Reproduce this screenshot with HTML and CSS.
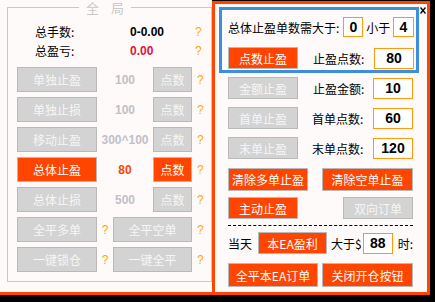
FILE: index.html
```html
<!DOCTYPE html>
<html>
<head>
<meta charset="utf-8">
<link rel="stylesheet" href="styles.css">
</head>
<body>
<div class="win">
  <div class="left">
    <fieldset class="group">
      <legend>全 局</legend>
      <div class="stat"><span class="slabel">总手数:</span><span class="sval">0-0.00</span><span class="q">?</span></div>
      <div class="stat"><span class="slabel">总盈亏:</span><span class="sval red">0.00</span><span class="q">?</span></div>
      <div class="brow first"><span class="btn gray w80">单独止盈</span><span class="bval">100</span><span class="btn gray pts">点数</span><span class="q qb">?</span></div>
      <div class="brow"><span class="btn gray w80">单独止损</span><span class="bval">100</span><span class="btn gray pts">点数</span><span class="q qb">?</span></div>
      <div class="brow"><span class="btn gray w80">移动止盈</span><span class="bval">300^100</span><span class="btn gray pts">点数</span><span class="q qb">?</span></div>
      <div class="brow"><span class="btn orange w80">总体止盈</span><span class="bval hot">80</span><span class="btn orange pts">点数</span><span class="q qb">?</span></div>
      <div class="brow"><span class="btn gray w80">总体止损</span><span class="bval">500</span><span class="btn gray pts">点数</span><span class="q qb">?</span></div>
      <div class="brow"><span class="btn gray w80">全平多单</span><span class="qm">?</span><span class="btn gray w79">全平空单</span><span class="q qb">?</span></div>
      <div class="brow"><span class="btn gray w80">一键锁仓</span><span class="qm">?</span><span class="btn gray w79">一键全平</span><span class="q qb">?</span></div>
    </fieldset>
  </div>
  <div class="right">
    <span class="close"><svg width="6" height="7" viewBox="0 0 6 7"><path d="M0.5 0.5 L5.5 6.5 M5.5 0.5 L0.5 6.5" stroke="#000" stroke-width="1.4" fill="none"/></svg></span>
    <div class="blue">
      <div class="r r1"><span>总体止盈单数需大于:</span><span class="inp i0">0</span><span class="lt">小于</span><span class="inp i4">4</span></div>
      <div class="r r2"><span class="btn orange b70">点数止盈</span><span class="lbl">止盈点数:</span><span class="inp i40">80</span></div>
    </div>
    <div class="row ra"><span class="btn gray b70">金额止盈</span><span class="lbl">止盈金额:</span><span class="inp i40">10</span></div>
    <div class="row"><span class="btn gray b70">首单止盈</span><span class="lbl l2">首单点数:</span><span class="inp i40">60</span></div>
    <div class="row"><span class="btn gray b70">末单止盈</span><span class="lbl l2">末单点数:</span><span class="inp i40">120</span></div>
    <div class="row rc"><span class="btn orange b80">清除多单止盈</span><span class="btn orange b91">清除空单止盈</span></div>
    <div class="row rd"><span class="btn orange b70">主动止盈</span><span class="btn gray b70 push">双向订单</span></div>
    <div class="dash"></div>
    <div class="row re"><span>当天</span><span class="btn orange b69">本EA盈利</span><span class="gt">大于$</span><span class="inp i30">88</span><span class="push">时:</span></div>
    <div class="row rf"><span class="btn orange b90">全平本EA订单</span><span class="btn orange b91">关闭开仓按钮</span></div>
  </div>
</div>
</body>
</html>
```
FILE: styles.css
```css
* { box-sizing: border-box; }
html, body { margin: 0; padding: 0; background: #000; }
body {
  width: 435px;
  height: 302px;
  overflow: hidden;
  font-family: "Noto Sans CJK SC", "Noto Sans", sans-serif;
  font-size: 12px;
  color: #000;
}
.win {
  width: 430px;
  display: flex;
  align-items: flex-start;
  border-bottom: 3px solid #ff4500;
}
.left {
  width: 212px;
  height: 292px;
  background: #fffafa;
  padding-left: 7px;
}
.group {
  margin: 0;
  width: 205px;
  border: 1px solid #c8c8c8;
  padding: 7px 0 9px 9px;
}
.group legend {
  margin-left: 62px;
  padding: 0 7px;
  font-size: 13px;
  line-height: 15px;
  color: #c8c8c8;
  word-spacing: 9px;
}
.stat { display: flex; align-items: center; height: 19px; }
.slabel { width: 113px; padding-left: 18px; }
.sval {
  width: 65px;
  font-family: "Liberation Sans", Arial, sans-serif;
  font-weight: bold;
  font-size: 12px;
}
.red { color: #dc143c; }
.q {
  color: #ffa500;
  font-family: "Liberation Sans", Arial, sans-serif;
  font-size: 12px;
}
.qb { margin-left: 5px; }
.qm {
  width: 16px;
  text-align: center;
  color: #ffa500;
  font-family: "Liberation Sans", Arial, sans-serif;
  font-size: 12px;
}
.brow { display: flex; align-items: center; height: 25px; margin-top: 5px; }
.brow.first { margin-top: 7px; }
.btn {
  display: flex;
  align-items: center;
  justify-content: center;
  height: 100%;
  border: 1px solid #b9b9b9;
  white-space: nowrap;
}
.gray { background: #d3d3d3; color: #f6f6f6; }
.orange { background: #ff4500; color: #fff; }
.w80 { width: 80px; }
.w79 { width: 79px; }
.pts { width: 39px; }
.bval {
  width: 56px;
  text-align: center;
  font-family: "Liberation Sans", Arial, sans-serif;
  font-weight: bold;
  color: #c0c0c8;
}
.bval.hot { color: #ff4500; }

.right {
  position: relative;
  width: 218px;
  height: 291px;
  margin-top: 1px;
  background: #fffafa;
  border: 3px solid #ff4500;
  border-bottom: 0;
}
.close { position: absolute; left: 205px; top: 3px; line-height: 0; }
.blue {
  margin: 3px 0 0 4px;
  width: 200px;
  height: 66px;
  border: 3px solid #3c8fdd;
  padding: 7px 2px 1px 6px;
}
.r { display: flex; align-items: center; }
.r1 { height: 20px; }
.r2 { height: 22px; margin-top: 10px; }
.inp {
  display: flex;
  align-items: center;
  justify-content: center;
  background: #fff;
  border: 1px solid #ff9a10;
  font-family: "Liberation Sans Narrow", "Liberation Sans", Arial, sans-serif;
  font-weight: bold;
  font-size: 14px;
}
.i0 { width: 20px; height: 20px; margin-left: 4px; }
.lt { margin-left: 3px; }
.i4 { width: 21px; height: 20px; margin-left: auto; }
.i40 { width: 40px; height: 21px; margin-left: auto; }
.i30 { width: 30px; height: 21px; margin-left: 1px; }
.b69 { width: 69px; }
.b70 { width: 70px; }
.b80 { width: 80px; }
.b90 { width: 90px; }
.b91 { width: 91px; margin-left: auto; }
.lbl { margin-left: 15px; }
.lbl.l2 { margin-left: 14px; }
.push { margin-left: auto; }
.row {
  display: flex;
  align-items: center;
  height: 22px;
  margin: 8px 14px 0 13px;
}
.row.ra { margin-top: 4px; }
.row.rc { margin-top: 9px; height: 23px; }
.row.rd { margin-top: 6px; }
.dash {
  margin: 6px 14px 0 13px;
  border-top: 1px dashed #000;
}
.row.re { margin-top: 6px; }
.re .b69 { margin-left: 6px; }
.gt { margin-left: 4px; }
.row.rf { margin-top: 9px; height: 24px; }
```
